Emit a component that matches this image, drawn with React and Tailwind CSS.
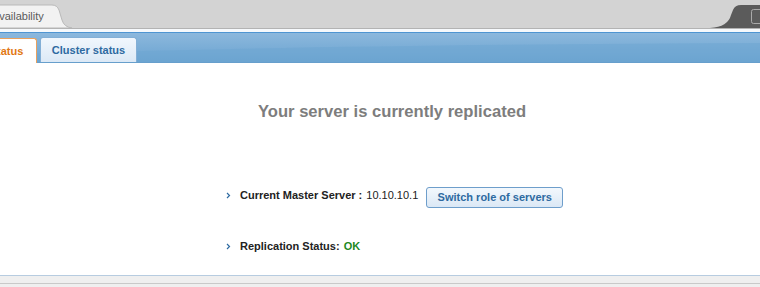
import React from 'react';

// High availability page: browser-ish tab strip, blue tab bar and the replication summary.
export default function App() {
  return (
    <div className="w-[760px] h-[287px] overflow-hidden bg-white font-['Liberation_Sans',Arial,sans-serif] flex flex-col">
      <TabStrip />
      <div className="h-[3px] bg-[#f6f9fc]" />
      <div className="h-[1px] bg-[#4f95d2]" />
      <TabBar />
      <main className="h-[212px] shrink-0 bg-white flex flex-col">
        <h1 className="pt-[39px] pl-[24px] text-center text-[16.6px] leading-[20px] font-bold text-[#7d7d7d]">
          Your server is currently replicated
        </h1>
        <ul className="pl-[225px] pt-[62px] flex flex-col gap-[29px] text-[11px] text-[#222]">
          <li className="flex items-center h-[22px]">
            <Chevron />
            <span className="font-bold">Current Master Server :</span>
            <span className="ml-[4px]">10.10.10.1</span>
            <button className="ml-[8px] mt-[4px] w-[137px] h-[21px] rounded-[3px] border border-[#6e9ecb] bg-gradient-to-b from-[#f3f8fd] to-[#dbe8f5] text-[11px] font-bold text-[#2e6aa1]">
              Switch role of servers
            </button>
          </li>
          <li className="flex items-center h-[22px]">
            <Chevron />
            <span className="font-bold">Replication Status:</span>
            <span className="ml-[4px] font-bold text-[#1e8a1e]">OK</span>
          </li>
        </ul>
      </main>
      <footer className="flex-1 border-t border-[#b7cce0] bg-[#efefef] pt-[7px]">
        <div className="h-[1px] bg-[#c9c9c9]" />
      </footer>
    </div>
  );
}

function Chevron() {
  return (
    <svg width="5" height="7" viewBox="0 0 5 7" className="mr-[9px] ml-[1px]">
      <path d="M1 1 L3.5 3.5 L1 6" fill="none" stroke="#2e6aa1" strokeWidth="1.2" />
    </svg>
  );
}

function TabStrip() {
  return (
    <div className="relative h-[29px] bg-[#d3d3d3] border-b border-[#b3b3b3] flex">
      <svg width="760" height="28" className="absolute left-0 top-0">
        <path d="M-20 28 L-20 8 Q-20 5 -17 5 L52 5 Q57 5 59 10 L62 20 Q64 27 72 28 Z" fill="#f2f2f2" stroke="#b9b9b9" />
        <path d="M710 28 Q728 27 731 15 L733 10 Q735 5 741 5 L770 5 L770 28 Z" fill="#5b5b5b" />
        <rect x="751.5" y="9.5" width="14" height="14" rx="2" fill="none" stroke="#a9a9a9" />
      </svg>
      <span className="relative ml-[-8px] mt-[9px] text-[11px] leading-[14px] text-[#5a5a5a]">Availability</span>
    </div>
  );
}

function TabBar() {
  return (
    <div className="relative h-[30px] bg-gradient-to-b from-[#8cb8dd] to-[#6aa3d0] flex items-end gap-[3px] border-b border-[#5f97c6]">
      <svg width="760" height="30" className="absolute left-0 top-0" preserveAspectRatio="none">
        <path d="M0 30 L0 22 Q300 12 760 10 L760 30 Z" fill="#6ea6d2" opacity="0.55" />
      </svg>
      <div className="relative ml-[-24px] w-[61px] h-[25px] mb-[-1px] rounded-t-[3px] border border-b-0 border-[#e9a15e] bg-white flex items-center justify-center text-[11px] font-bold text-[#e27812]">
        Status
      </div>
      <div className="relative w-[97px] h-[25px] rounded-t-[3px] border border-b-0 border-[#83afd6] bg-gradient-to-b from-[#f1f7fd] to-[#dce9f6] flex items-center justify-center text-[11px] font-bold text-[#2e6aa1]">
        Cluster status
      </div>
    </div>
  );
}
